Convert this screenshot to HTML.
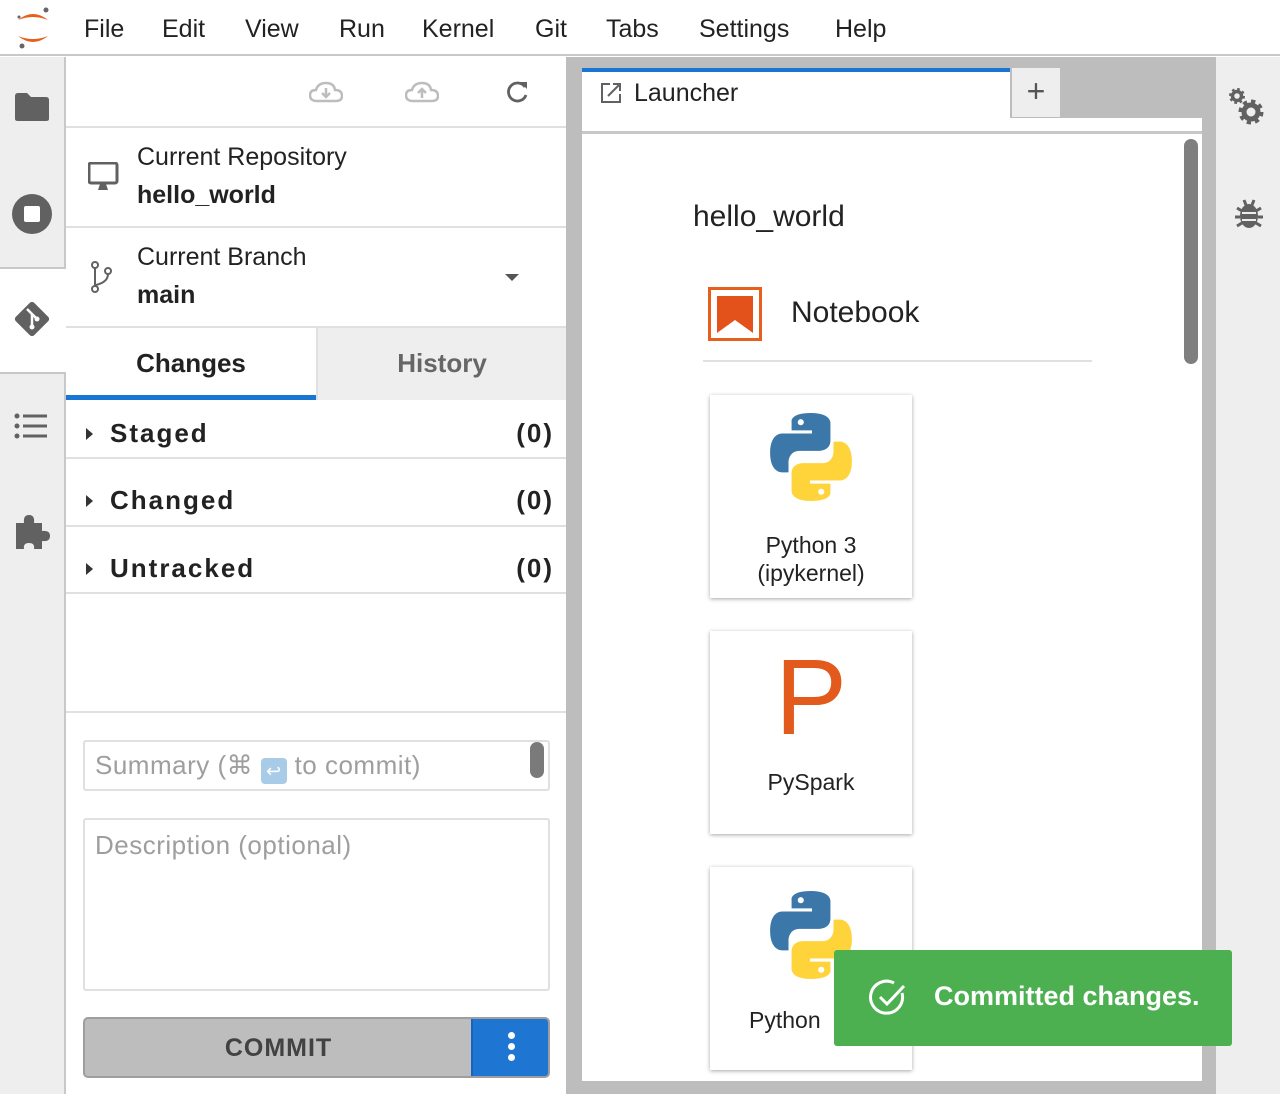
<!DOCTYPE html>
<html><head><meta charset="utf-8"><style>
*{box-sizing:border-box;margin:0;padding:0}
body{width:1280px;height:1094px;overflow:hidden;font-family:"Liberation Sans",sans-serif;background:#fff;position:relative;color:#000}
.a{position:absolute}
.menu span{position:absolute;top:15px;font-size:25px;color:#222}
.sec{position:absolute;left:66px;width:500px;border-bottom:2px solid #e0e0e0}
.sec .t{position:absolute;left:44px;font-size:26px;font-weight:bold;letter-spacing:2px;color:#222}
.sec .c{position:absolute;right:12px;font-size:26px;font-weight:bold;letter-spacing:2px;color:#222}
.sec .tri{position:absolute;left:20px;width:0;height:0;border-left:7px solid #333;border-top:6px solid transparent;border-bottom:6px solid transparent}
.card{position:absolute;left:710px;width:202px;height:203px;background:#fff;box-shadow:0 1px 4px rgba(0,0,0,.35);text-align:center;font-size:23px;color:#222}
</style></head><body>
<div class="a" style="left:0;top:0;width:1280px;height:56px;border-bottom:2px solid #c8c8c8;background:#fff"></div>
<svg class="a" style="left:14px;top:6px" width="38" height="44" viewBox="0 0 38 44">
<path d="M4 14 Q19 2 34 14 Q19 8 4 14Z" fill="#e65f1d"/><path d="M4 30 Q19 42 34 30 Q19 36 4 30Z" fill="#e65f1d"/>
<circle cx="32" cy="4" r="2.5" fill="#666"/><circle cx="5" cy="11" r="1.5" fill="#666"/><circle cx="8" cy="40" r="2.5" fill="#666"/></svg>
<div class="menu"><span style="left:84px">File</span><span style="left:162px">Edit</span><span style="left:245px">View</span><span style="left:339px">Run</span><span style="left:422px">Kernel</span><span style="left:535px">Git</span><span style="left:606px">Tabs</span><span style="left:699px">Settings</span><span style="left:835px">Help</span></div>
<div class="a" style="left:0;top:57px;width:66px;height:1037px;background:#eeeeee;border-right:2px solid #c8c8c8"></div>
<div class="a" style="left:0;top:267px;width:66px;height:107px;background:#fff;border-top:2px solid #c8c8c8;border-bottom:2px solid #c8c8c8"></div>
<svg class="a" style="left:14px;top:92px" width="36" height="30"><path d="M1 4 Q1 1 4 1 H13 L17 5 H32 Q35 5 35 8 V27 Q35 29 32 29 H4 Q1 29 1 27Z" fill="#616161"/></svg>
<svg class="a" style="left:11px;top:193px" width="42" height="42"><circle cx="21" cy="21" r="20" fill="#616161"/><rect x="13" y="13" width="16" height="16" rx="2" fill="#fff"/></svg>
<svg class="a" style="left:10px;top:297px" width="44" height="44"><rect x="9" y="9" width="26" height="26" rx="3" fill="#616161" transform="rotate(45 22 22)"/><path d="M17 12 L27 22 M22 17 V30" stroke="#fff" stroke-width="2.5"/><circle cx="22" cy="30" r="2.5" fill="#fff"/><circle cx="27" cy="22" r="2.5" fill="#fff"/></svg>
<svg class="a" style="left:14px;top:412px" width="36" height="28"><g fill="#616161"><circle cx="3" cy="4" r="2.5"/><circle cx="3" cy="14" r="2.5"/><circle cx="3" cy="24" r="2.5"/><rect x="9" y="2.5" width="24" height="3"/><rect x="9" y="12.5" width="24" height="3"/><rect x="9" y="22.5" width="24" height="3"/></g></svg>
<svg class="a" style="left:14px;top:513px" width="38" height="38"><path d="M2 10 H10 Q9 2 15 2 Q21 2 20 10 H28 V18 Q36 17 36 23 Q36 29 28 28 V36 H20 Q21 30 15 30 Q9 30 10 36 H2Z" fill="#616161"/></svg>
<div class="a" style="left:66px;top:57px;width:500px;height:71px;border-bottom:2px solid #e0e0e0"></div>
<svg class="a" style="left:309px;top:80px" width="34" height="24"><path d="M8 21 Q1 21 1 15 Q1 10 7 10 Q9 3 17 3 Q25 3 26 10 Q33 10 33 16 Q33 21 27 21Z" fill="none" stroke="#bdbdbd" stroke-width="2.5"/><path d="M17 8 V17 M13 13 L17 17 L21 13" stroke="#bdbdbd" stroke-width="2.5" fill="none"/></svg>
<svg class="a" style="left:405px;top:80px" width="34" height="24"><path d="M8 21 Q1 21 1 15 Q1 10 7 10 Q9 3 17 3 Q25 3 26 10 Q33 10 33 16 Q33 21 27 21Z" fill="none" stroke="#bdbdbd" stroke-width="2.5"/><path d="M17 18 V9 M13 13 L17 9 L21 13" stroke="#bdbdbd" stroke-width="2.5" fill="none"/></svg>
<svg class="a" style="left:505px;top:79px" width="26" height="26"><path d="M20 8 A9 9 0 1 0 21 16" fill="none" stroke="#616161" stroke-width="2.8"/><path d="M15 3 H22 V10Z" fill="#616161"/></svg>
<div class="a" style="left:66px;top:128px;width:500px;height:100px;border-bottom:2px solid #e0e0e0"></div>
<svg class="a" style="left:88px;top:162px" width="32" height="30"><rect x="1" y="1" width="28" height="20" rx="2" fill="none" stroke="#616161" stroke-width="3"/><path d="M10 28 L12 22 H18 L20 28Z" fill="#616161"/></svg>
<div class="a" style="left:137px;top:143px;font-size:25px;color:#222">Current Repository</div>
<div class="a" style="left:137px;top:181px;font-size:25px;font-weight:bold;color:#222">hello_world</div>
<div class="a" style="left:66px;top:228px;width:500px;height:100px;border-bottom:2px solid #e0e0e0"></div>
<svg class="a" style="left:88px;top:260px" width="28" height="34"><g fill="none" stroke="#616161" stroke-width="2"><circle cx="7" cy="5" r="3"/><circle cx="7" cy="29" r="3"/><circle cx="20" cy="11" r="3"/><path d="M7 8 V26 M20 14 Q20 22 8 25"/></g></svg>
<div class="a" style="left:137px;top:243px;font-size:25px;color:#222">Current Branch</div>
<div class="a" style="left:137px;top:281px;font-size:25px;font-weight:bold;color:#222">main</div>
<div class="a" style="left:505px;top:274px;border-top:7px solid #555;border-left:7px solid transparent;border-right:7px solid transparent"></div>
<div class="a" style="left:66px;top:328px;width:250px;height:72px;background:#fff;border-bottom:5px solid #1976d2;text-align:center;font-size:26px;font-weight:bold;line-height:70px;color:#222">Changes</div>
<div class="a" style="left:316px;top:328px;width:250px;height:72px;background:#eeeeee;border-left:2px solid #e0e0e0;text-align:center;font-size:26px;font-weight:bold;line-height:70px;color:#666">History</div>
<div class="sec" style="top:400px;height:59px"><div class="tri" style="top:28px"></div><div class="t" style="top:18px">Staged</div><div class="c" style="top:18px">(0)</div></div>
<div class="sec" style="top:459px;height:68px"><div class="tri" style="top:36px"></div><div class="t" style="top:26px">Changed</div><div class="c" style="top:26px">(0)</div></div>
<div class="sec" style="top:527px;height:67px"><div class="tri" style="top:36px"></div><div class="t" style="top:26px">Untracked</div><div class="c" style="top:26px">(0)</div></div>
<div class="a" style="left:66px;top:711px;width:500px;height:2px;background:#e0e0e0"></div>
<div class="a" style="left:83px;top:740px;width:467px;height:51px;border:2px solid #e0e0e0;border-radius:3px"></div>
<div class="a" style="left:95px;top:750px;font-size:26px;color:#9e9e9e;letter-spacing:.5px">Summary (⌘ <span style="display:inline-block;width:26px;height:26px;background:#a8cbe8;border-radius:4px;vertical-align:-3px;color:#fff;font-size:18px;text-align:center;line-height:26px">↩</span> to commit)</div>
<div class="a" style="left:530px;top:742px;width:14px;height:36px;background:#7a7a7a;border-radius:7px"></div>
<div class="a" style="left:83px;top:818px;width:467px;height:173px;border:2px solid #e0e0e0;border-radius:3px"></div>
<div class="a" style="left:95px;top:830px;font-size:26px;color:#9e9e9e;letter-spacing:.5px">Description (optional)</div>
<div class="a" style="left:83px;top:1017px;width:467px;height:61px;background:#bdbdbd;border:2px solid #9e9e9e;border-radius:5px;overflow:hidden">
<div class="a" style="left:0;top:0;width:387px;height:57px;text-align:center;line-height:58px;font-size:25px;font-weight:bold;color:#424242;letter-spacing:1px">COMMIT</div>
<div class="a" style="left:386px;top:-2px;width:81px;height:61px;background:#1f76d2;border:2px solid #1565c0;border-radius:0 5px 5px 0"></div>
<div class="a" style="left:423px;top:13px;width:7px;height:7px;border-radius:50%;background:#fff;box-shadow:0 11px 0 #fff,0 22px 0 #fff"></div></div>
<div class="a" style="left:566px;top:57px;width:650px;height:1037px;background:#bdbdbd"></div>
<div class="a" style="left:582px;top:118px;width:620px;height:963px;background:#fff"></div>
<div class="a" style="left:582px;top:68px;width:428px;height:64px;background:#fff;border-top:4px solid #1976d2"></div>
<div class="a" style="left:582px;top:131px;width:620px;height:3px;background:#c8c8c8"></div>
<svg class="a" style="left:600px;top:82px" width="22" height="22"><path d="M10 2 H2 V20 H20 V12" fill="none" stroke="#616161" stroke-width="2"/><path d="M8 14 L20 2 M13 2 H20 V9" fill="none" stroke="#616161" stroke-width="2"/></svg>
<div class="a" style="left:634px;top:79px;font-size:25px;color:#222">Launcher</div>
<div class="a" style="left:1012px;top:68px;width:48px;height:49px;background:#eeeeee;text-align:center;font-size:32px;line-height:46px;color:#555">+</div>
<div class="a" style="left:1184px;top:139px;width:14px;height:225px;background:#7f7f7f;border-radius:7px"></div>
<div class="a" style="left:693px;top:200px;font-size:30px;color:#222">hello_world</div>
<svg class="a" style="left:708px;top:287px" width="54" height="54"><rect x="1.5" y="1.5" width="51" height="51" fill="none" stroke="#e65f1d" stroke-width="3"/><path d="M9 9 H45 V46 L27 33 L9 46Z" fill="#e4521b"/></svg>
<div class="a" style="left:791px;top:296px;font-size:30px;color:#222">Notebook</div>
<div class="a" style="left:703px;top:360px;width:389px;height:2px;background:#e0e0e0"></div>
<svg width="0" height="0" style="position:absolute"><defs>
<g id="py"><path d="M42 2 C22 2 23 10 23 10 V19 H43 V22 H14 C14 22 2 21 2 41 C2 60 13 60 13 60 H20 V50 C20 50 20 39 31 39 H50 C50 39 61 39 61 29 V12 C61 12 62 2 42 2Z" fill="#3b77a8"/><circle cx="32" cy="11" r="3" fill="#fff"/><path d="M42 88 C62 88 61 80 61 80 V71 H41 V68 H70 C70 68 82 69 82 49 C82 30 71 30 71 30 H64 V40 C64 40 64 51 53 51 H34 C34 51 23 51 23 61 V78 C23 78 22 88 42 88Z" fill="#ffd43b"/><circle cx="52" cy="79" r="3" fill="#fff"/></g></defs></svg>
<div class="card" style="top:395px"><svg style="margin-top:16px" width="86" height="92" viewBox="0 0 84 90"><use href="#py"/></svg><div style="margin-top:22px;line-height:28px">Python 3<br>(ipykernel)</div></div>
<div class="card" style="top:631px"><div style="color:#e25a1c;font-size:108px;line-height:120px;margin-top:6px">P</div><div style="margin-top:12px">PySpark</div></div>
<div class="card" style="top:867px"><svg style="margin-top:22px" width="90" height="92" viewBox="0 0 84 90"><use href="#py"/></svg><div style="margin-top:20px;text-align:left;padding-left:39px">Python</div></div>
<div class="a" style="left:1216px;top:57px;width:64px;height:1037px;background:#eeeeee"></div>
<svg class="a" style="left:1229px;top:88px" width="38" height="40">
<circle cx="8" cy="8" r="4.5" fill="none" stroke="#616161" stroke-width="3.5"/><circle cx="8" cy="8" r="6.5" fill="none" stroke="#616161" stroke-width="3" stroke-dasharray="2.5 2.6"/>
<circle cx="22" cy="24" r="7" fill="none" stroke="#616161" stroke-width="5"/><circle cx="22" cy="24" r="10.5" fill="none" stroke="#616161" stroke-width="4" stroke-dasharray="4.2 4"/></svg>
<svg class="a" style="left:1233px;top:197px" width="32" height="34"><ellipse cx="16" cy="19" rx="9" ry="12" fill="#616161"/><path d="M4 11 L9 14 M28 11 L23 14 M2 20 H7 M30 20 H25 M4 29 L9 26 M28 29 L23 26 M11 3 L13 8 M21 3 L19 8" stroke="#616161" stroke-width="3"/><path d="M9 16 H23 M9 23 H23" stroke="#eee" stroke-width="2"/></svg>
<div class="a" style="left:834px;top:950px;width:398px;height:96px;background:#4caf50;border-radius:3px"></div>
<svg class="a" style="left:868px;top:978px" width="40" height="40"><path d="M34 15 A16 16 0 1 1 26 5" fill="none" stroke="#fff" stroke-width="3"/><path d="M12 19 L19 26 L36 8" fill="none" stroke="#fff" stroke-width="3"/></svg>
<div class="a" style="left:934px;top:981px;font-size:27px;font-weight:bold;color:#fff">Committed changes.</div>
</body></html>
